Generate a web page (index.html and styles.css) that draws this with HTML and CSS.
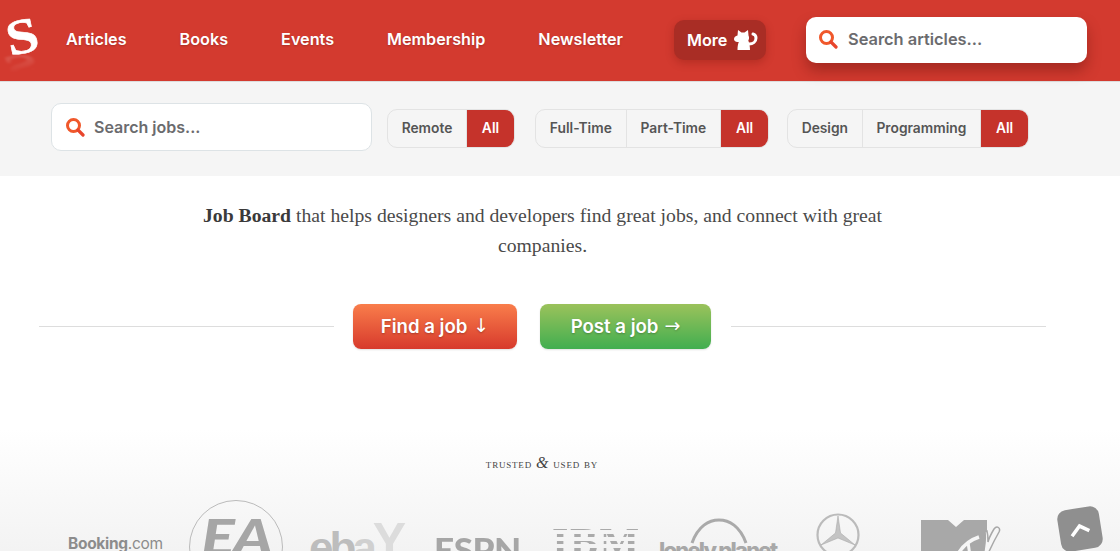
FILE: index.html
```html
<!DOCTYPE html>
<html lang="en">
<head>
<meta charset="utf-8">
<title>Job Board</title>
<link rel="stylesheet" href="styles.css">
</head>
<body>
<header class="site-header">
  <a class="logo"><span class="logo-s">S</span><span class="logo-reflect">S</span></a>
  <nav class="nav">
    <a>Articles</a><a>Books</a><a>Events</a><a>Membership</a><a>Newsletter</a>
  </nav>
  <a class="more">More
    <svg class="cat" width="24" height="22" viewBox="0 0 24 22">
      <path fill="#fff" d="M4 1l3.500 2.500h3L14 1l.5 5.500c.8 1.500.8 3.500-.2 5 1 2.500 1.700 6 1.700 9.500H3.500c0-3.500.5-6 1.300-8C2.500 13 0 12.500 0 10c0-2 1.500-3 3.500-3.500z"/>
      <path fill="none" stroke="#fff" stroke-width="3" stroke-linecap="round" d="M15 15c4 0 7-2.500 7-6 0-2-1-3.500-3-4"/>
    </svg>
  </a>
  <label class="search search-main">
    <svg class="mag" width="20" height="20" viewBox="0 0 20 20"><circle cx="8.500" cy="8.500" r="6" fill="none" stroke="#f0582b" stroke-width="3"/><path d="M13 13l5 5" stroke="#e8452c" stroke-width="3.200" stroke-linecap="round"/></svg>
    <span>Search articles...</span>
  </label>
</header>

<section class="filters">
  <label class="search search-jobs">
    <svg class="mag" width="20" height="20" viewBox="0 0 20 20"><circle cx="8.500" cy="8.500" r="6" fill="none" stroke="#f0582b" stroke-width="3"/><path d="M13 13l5 5" stroke="#e8452c" stroke-width="3.200" stroke-linecap="round"/></svg>
    <span>Search jobs...</span>
  </label>
  <div class="seg seg-a"><a>Remote</a><a class="on">All</a></div>
  <div class="seg seg-b"><a>Full-Time</a><a>Part-Time</a><a class="on">All</a></div>
  <div class="seg seg-c"><a>Design</a><a>Programming</a><a class="on">All</a></div>
</section>

<main class="intro">
  <p class="lead"><strong>Job Board</strong> that helps designers and developers find great jobs, and connect with great companies.</p>
  <div class="cta">
    <span class="rule rule-left"></span>
    <a class="btn btn-find">Find a job <span class="arrow">↓</span></a>
    <a class="btn btn-post">Post a job <span class="arrow">→</span></a>
    <span class="rule"></span>
  </div>
</main>

<section class="trusted">
  <h2 class="trusted-title">trusted <i>&amp;</i> used by</h2>
  <div class="logos">
    <span class="l-booking">Booking<em>.com</em></span>
    <span class="l-ea"><b>EA</b></span>
    <span class="l-ebay"><i>e</i><i>b</i><i class="a">a</i><i class="y">Y</i></span>
    <span class="l-espn">ESPN</span>
    <span class="l-ibm">IBM</span>
    <span class="l-lonely">
      <svg class="arc" width="60" height="26" viewBox="0 0 60 26"><path d="M3 25C9 8 20 2 30 2s21 6 27 23" fill="none" stroke="#aaa" stroke-width="3"/></svg>
      <span>lonely planet</span>
    </span>
    <svg class="l-merc" width="44" height="44" viewBox="0 0 44 44"><circle cx="22" cy="22" r="20.500" fill="none" stroke="#bbb" stroke-width="2.200"/><path d="M22 3l2.500 17L39 32 22 25 5 32l14.500-12z" fill="#c4c4c4" stroke="#aaa" stroke-width=".6"/></svg>
    <svg class="l-mtv" width="80" height="36" viewBox="0 0 80 36">
      <path d="M0 0h27l8 7 8-7h23v36H0z" fill="#a8a8a8"/>
      <path d="M36 36c4-8 10-15 22-19" fill="none" stroke="#f6f6f6" stroke-width="3.500"/>
      <path d="M47 22l2 14" fill="none" stroke="#f6f6f6" stroke-width="3"/>
      <path d="M64 12c1 6 0 14-2 24h4c4-9 8-17 12-24 2-4-2-7-5-3-3 5-5 9-6 13 0-4 0-7-1-11z" fill="#f6f6f6" stroke="#a8a8a8" stroke-width="1.500"/>
    </svg>
  </div>
</section>

<a class="to-top"><svg width="24" height="16" viewBox="0 0 24 16"><path d="M3 14l9-9 9 6" fill="none" stroke="#fff" stroke-width="3.500"/></svg></a>
</body>
</html>
```

FILE: styles.css
```css
* { box-sizing: border-box; }
html, body { margin: 0; height: 551px; overflow: hidden; }
body { background: #fff; font-family: "Inter", "Liberation Sans", sans-serif; color: #555; position: relative; }

.site-header {
  height: 82px;
  background: #d33a2f;
  border-bottom: 1px solid #ddd;
  display: flex;
  align-items: center;
  position: relative;
  z-index: 2;
}
.logo { width: 66px; height: 82px; position: relative; flex: none; }
.logo-s, .logo-reflect {
  position: absolute;
  left: 5px;
  font: 700 50px/50px "Liberation Serif", serif;
  color: #fff;
  width: 34px;
  text-align: center;
  -webkit-text-stroke: .6px #fff;
}
.logo-s { top: 11px; transform: rotate(-12deg) scaleX(1.150); }
.logo-reflect {
  top: 41px;
  transform: scale(1.150, -0.6) rotate(12deg);
  opacity: .2;
  filter: blur(1.500px);
  -webkit-mask-image: linear-gradient(to top, #000, transparent 70%);
  mask-image: linear-gradient(to top, #000, transparent 70%);
}

.nav { display: flex; gap: 53px; width: 608px; flex: none; margin-top: -3px; }
.nav a { color: #fff; font-weight: 600; font-size: 16.200px; text-shadow: 0 1px 2px rgba(0,0,0,.2); }

.more {
  width: 92px;
  height: 40px;
  flex: none;
  margin-right: 40px;
  margin-top: -1px;
  background: #a92d25;
  border-radius: 10px;
  box-shadow: 0 3px 8px rgba(90,10,5,.25);
  color: #fff;
  font-weight: 600;
  font-size: 16.200px;
  display: flex;
  align-items: center;
  padding: 0 0 1px 13px;
  gap: 7px;
}
.cat { flex: none; }

.search {
  display: flex;
  align-items: center;
  background: #fff;
  font-weight: 600;
  color: #6b6b6e;
}
.search-main {
  width: 281px;
  height: 46px;
  margin-top: -1px;
  border-radius: 10px;
  padding: 0 0 2px 12px;
  gap: 10px;
  font-size: 16.400px;
  box-shadow: 0 8px 14px rgba(90,15,10,.38);
}
.search-jobs {
  width: 321px;
  height: 48px;
  border: 1px solid #dde3e6;
  border-radius: 10px;
  padding-left: 13px;
  gap: 9px;
  font-size: 16px;
  flex: none;
  margin-right: 15px;
}

.filters {
  height: 94px;
  background: #f5f5f5;
  display: flex;
  align-items: center;
  padding: 0 0 4px 51px;
}
.seg {
  display: flex;
  height: 39px;
  margin-top: 2px;
  border: 1px solid #e3e3e3;
  border-radius: 10px;
  overflow: hidden;
  flex: none;
  font-size: 13.800px;
  font-weight: 600;
  color: #555;
}
.seg-a { width: 128px; margin-right: 20px; }
.seg-b { width: 234px; margin-right: 18px; }
.seg-c { width: 242px; }
.seg a { display: flex; align-items: center; justify-content: center; border-right: 1px solid #e3e3e3; flex: 1 1 auto; }
.seg a.on { background: #c5332b; color: #fff; border: 0; flex: none; width: 47px; }

.intro { width: 1007px; margin-left: 39px; }
.lead {
  width: 700px;
  margin: 24px auto 0;
  text-align: center;
  font: 400 19.700px/30px "Liberation Serif", serif;
  color: #4a4a4a;
}
.lead strong { color: #3a3a3a; }
.cta { display: flex; align-items: center; margin-top: 44px; }
.rule { flex: 1; height: 1px; background: #ddd; }
.rule-left { flex: none; width: 295px; }
.btn {
  height: 45px;
  display: flex;
  align-items: center;
  justify-content: center;
  color: #fff;
  font-weight: 600;
  font-size: 18.600px;
  gap: 6px;
  padding-bottom: 2px;
  border-radius: 8px;
  text-shadow: 0 1px 2px rgba(0,0,0,.25);
  box-shadow: 0 1px 2px rgba(0,0,0,.12);
}
.arrow { font: 400 19px/1 "DejaVu Sans", sans-serif; }
.btn-find { width: 164px; margin: 0 23px 0 19px; background: linear-gradient(#f97d4b, #d73a2c); }
.btn-post { width: 171px; margin: 0 20px 0 0; background: linear-gradient(#9bc25b, #41ae50); }

.trusted {
  margin-top: 80px;
  height: 122px;
  background: linear-gradient(#fff, #f3f3f3);
  overflow: hidden;
  position: relative;
}
.trusted-title {
  margin: 0;
  position: absolute;
  top: 25px;
  left: 0;
  width: 1084px;
  text-align: center;
  font: 400 13px/18px "Liberation Serif", serif;
  font-variant: small-caps;
  letter-spacing: .8px;
  color: #444;
}
.trusted-title i { font-size: 16px; }
.logos { position: relative; height: 122px; }
.logos > * { position: absolute; }
.l-booking { left: 68px; top: 105px; font: 700 15.500px/20px "Inter", sans-serif; color: #8c8c8c; letter-spacing: -.3px; }
.l-booking em { font-style: normal; font-weight: 400; }
.l-ea { left: 189px; top: 71px; width: 94px; height: 94px; border: 1px solid #bbb; border-radius: 50%; text-align: center; }
.l-ea b { font: italic 900 50px/52px "Lato", sans-serif; color: #a6a6a6; display: block; margin-top: 9px; letter-spacing: -2px; transform: scaleX(1.250); }
.l-ebay { left: 309px; top: 92px; font: 700 44px/50px "Liberation Sans", sans-serif; letter-spacing: -4px; white-space: nowrap; }
.l-ebay i { font-style: normal; color: #bdbdbd; }
.l-ebay .a { color: #d0d0d0; }
.l-ebay .y { color: #dcdcdc; font-size: 50px; position: relative; top: -5px; }
.l-espn { left: 434px; top: 103px; font: 900 32px/36px "Lato", sans-serif; color: #a6a6a6; letter-spacing: -.5px; transform: scaleX(1.100); transform-origin: left; }
.l-ibm {
  left: 552px; top: 91px;
  font: 700 40px/44px "Liberation Serif", serif;
  letter-spacing: 1.500px;
  color: transparent;
  background: repeating-linear-gradient(#aaa 0 3px, transparent 3px 7px);
  -webkit-background-clip: text;
  background-clip: text;
  transform: scaleX(1.050);
  transform-origin: left;
}
.l-lonely { left: 659px; top: 89px; width: 118px; }
.l-lonely .arc { position: absolute; left: 30px; top: 0; }
.l-lonely span { position: absolute; left: 0; top: 17px; font: 800 22px/30px "Inter", sans-serif; letter-spacing: -1.800px; color: #a8a8a8; white-space: nowrap; }
.l-merc { left: 816px; top: 84px; }
.l-mtv { left: 921px; top: 91px; }

.to-top {
  position: absolute;
  left: 1059px;
  top: 508px;
  width: 42px;
  height: 42px;
  border-radius: 9px;
  background: #8f8f8f;
  transform: rotate(-9deg);
  display: flex;
  align-items: center;
  justify-content: center;
  z-index: 3;
}
```
